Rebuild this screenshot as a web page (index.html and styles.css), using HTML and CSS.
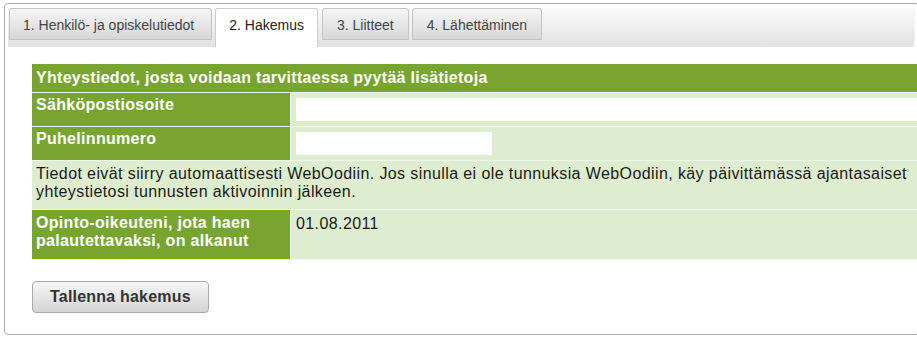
FILE: index.html
```html
<!DOCTYPE html>
<html lang="fi">
<head>
<meta charset="utf-8">
<title>Hakemus</title>
<link rel="stylesheet" href="styles.css">
</head>
<body>
<div class="page">
  <div class="tabs">
    <ul class="tab-nav">
      <li class="tab tab-first">1. Henkilö- ja opiskelutiedot</li>
      <li class="tab active">2. Hakemus</li>
      <li class="tab">3. Liitteet</li>
      <li class="tab">4. Lähettäminen</li>
    </ul>
    <div class="panel">
      <table class="form">
        <tr><th class="head" colspan="2">Yhteystiedot, josta voidaan tarvittaessa pyytää lisätietoja</th></tr>
        <tr><th class="label">Sähköpostiosoite</th><td class="value"><input class="field field-wide" type="text"></td></tr>
        <tr><th class="label">Puhelinnumero</th><td class="value"><input class="field field-short" type="text"></td></tr>
        <tr><td class="note" colspan="2">Tiedot eivät siirry automaattisesti WebOodiin. Jos sinulla ei ole tunnuksia WebOodiin, käy päivittämässä ajantasaiset yhteystietosi tunnusten aktivoinnin jälkeen.</td></tr>
        <tr><th class="label label-multi">Opinto-oikeuteni, jota haen palautettavaksi, on alkanut</th><td class="value value-text">01.08.2011</td></tr>
      </table>
      <button class="save" type="button">Tallenna hakemus</button>
    </div>
  </div>
</div>
</body>
</html>
```
FILE: styles.css
```css
html, body {
  margin: 0;
  overflow: hidden;
  background: #fff;
}
body {
  font-family: "Liberation Sans", Arial, sans-serif;
  color: #1a1a1a;
}
.page {
  padding: 3px 0 0 4px;
}
.tabs {
  width: 915px;
  box-sizing: border-box;
  border: 1px solid #aaaaaa;
  border-radius: 4px;
  padding: 4px 3px 21px 3px;
}
.tab-nav {
  display: flex;
  align-items: flex-start;
  list-style: none;
  margin: 0;
  padding: 0 0 0 1px;
  height: 39px;
  background: linear-gradient(#fbfbfb, #e2e2e2);
  border-right: 1px solid #f4f4f4;
}
.tab {
  box-sizing: border-box;
  height: 32px;
  margin-right: 3px;
  padding: 8px 14px 0;
  border: 1px solid #c3c3c3;
  border-radius: 3px 3px 0 0;
  background: linear-gradient(#f6f6f6, #d8d8d8);
  font-size: 14px;
  line-height: 16px;
  color: #444;
  white-space: nowrap;
}
.tab-first {
  padding: 8px 17px 0 13px;
}
.tab.active {
  height: 39px;
  padding: 8px 13px 0;
  border-bottom: 0;
  background: #fff;
  border-color: #cccccc;
  color: #222;
  margin-right: 4px;
}
.panel {
  padding: 17px 0 0 24px;
}
.form {
  width: 900px;
  border-collapse: separate;
  border-spacing: 0;
  font-size: 16px;
  line-height: 18px;
}
.form th, .form td {
  border-bottom: 1px solid #eef6e7;
  text-align: left;
  vertical-align: top;
}
.head {
  background: #77a530;
  color: #fff;
  font-weight: bold;
  letter-spacing: 0.3px;
  padding: 5px 4px;
}
.label {
  width: 249px;
  background: #77a530;
  color: #fff;
  font-weight: bold;
  letter-spacing: 0.3px;
  padding: 3px 5px 5px 4px;
  border-right: 1px solid #eef6e7;
}
.label-multi {
  padding: 4px 5px 9px 4px;
}
.value {
  background: #deedcf;
  padding: 5px 5px 5px 5px;
}
.value-text {
  letter-spacing: 0.4px;
  color: #1a1a1a;
}
.note {
  background: #deedcf;
  padding: 4px 4px 8px 4px;
  letter-spacing: 0.4px;
  color: #1a1a1a;
}
.field {
  display: block;
  box-sizing: border-box;
  height: 23px;
  border: 1px solid #fff;
  background: #fff;
  margin: 0;
  padding: 0 3px;
  font: inherit;
}
.field-wide {
  width: 625px;
}
.field-short {
  width: 196px;
}
.save {
  display: block;
  margin-top: 21px;
  box-sizing: border-box;
  height: 32px;
  padding: 0 17px;
  border: 1px solid #a9a9a9;
  border-radius: 4px;
  background: linear-gradient(#f6f6f6, #d5d5d5);
  font-family: "Liberation Sans", Arial, sans-serif;
  font-size: 16px;
  font-weight: bold;
  letter-spacing: 0.2px;
  color: #333;
}
```
